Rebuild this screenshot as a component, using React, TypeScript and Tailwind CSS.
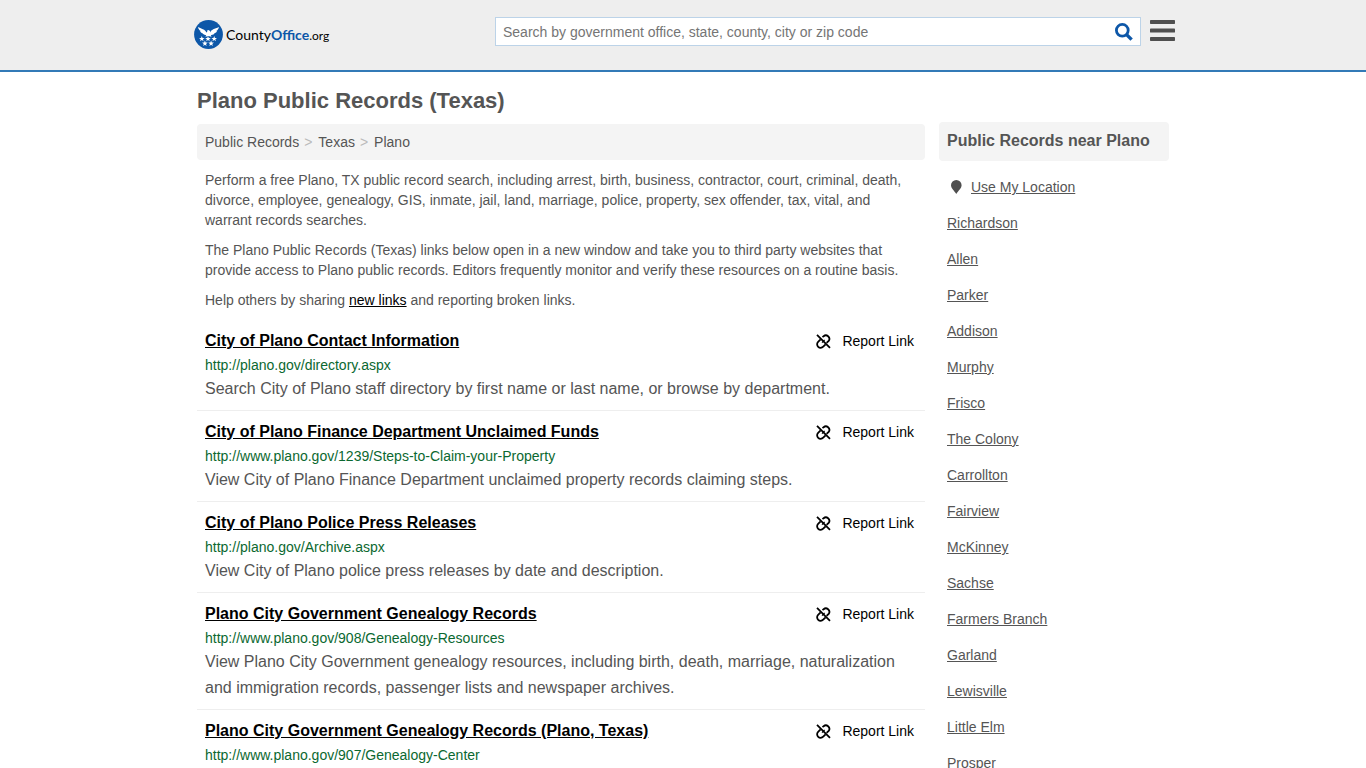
import React from "react";

type RecordLink = { title: string; url: string; description?: string };

const records: RecordLink[] = [
  {
    title: "City of Plano Contact Information",
    url: "http://plano.gov/directory.aspx",
    description: "Search City of Plano staff directory by first name or last name, or browse by department.",
  },
  {
    title: "City of Plano Finance Department Unclaimed Funds",
    url: "http://www.plano.gov/1239/Steps-to-Claim-your-Property",
    description: "View City of Plano Finance Department unclaimed property records claiming steps.",
  },
  {
    title: "City of Plano Police Press Releases",
    url: "http://plano.gov/Archive.aspx",
    description: "View City of Plano police press releases by date and description.",
  },
  {
    title: "Plano City Government Genealogy Records",
    url: "http://www.plano.gov/908/Genealogy-Resources",
    description:
      "View Plano City Government genealogy resources, including birth, death, marriage, naturalization and immigration records, passenger lists and newspaper archives.",
  },
  {
    title: "Plano City Government Genealogy Records (Plano, Texas)",
    url: "http://www.plano.gov/907/Genealogy-Center",
  },
];

const nearby = [
  "Richardson", "Allen", "Parker", "Addison", "Murphy", "Frisco", "The Colony", "Carrollton",
  "Fairview", "McKinney", "Sachse", "Farmers Branch", "Garland", "Lewisville", "Little Elm", "Prosper",
];

const STAR = "M0 -2.9L.75 -.95 2.8 -.9 1.15 .4 1.75 2.4 0 1.2 -1.75 2.4 -1.15 .4 -2.8 -.9 -.75 -.95Z";
const starSpots = [[7.8, 18.9], [14, 18.9], [20.2, 18.9], [10.9, 23.5], [17.1, 23.5]];

function Emblem() {
  return (
    <svg viewBox="0 0 29 29" className="size-[29px]" aria-hidden="true">
      <circle cx="14.5" cy="14.5" r="14.4" fill="#0d57a8" />
      <g fill="#fff">
        <path d="M4 7C7 8.8 10 9 11.5 11L12.4 12.4 13.4 11.8 12.8 10.8 14.6 10 16 11 16.3 12.4C17.2 9.4 20.5 9 25 7 24.4 9.2 23.5 10.3 22.3 11.1L23 11.2C22.2 12.6 21 13.2 19.9 13.5L20.4 13.8C19 15 17.6 15.1 16.8 15.2L17.6 16.8 14.5 16 11.4 16.8 12.2 15.2C11 15 10 14.8 8.7 13.8L9.2 13.5C7.8 13.1 6.8 12.4 6 11.2L6.8 11.1C5.4 10.2 4.4 9.2 4 7Z" />
        {starSpots.map(([x, y]) => (
          <path key={`${x}-${y}`} d={STAR} transform={`translate(${x} ${y})`} />
        ))}
      </g>
    </svg>
  );
}

function BrokenLinkIcon() {
  return (
    <svg viewBox="0 0 15 15" className="size-[15px]" fill="none" stroke="#000" strokeWidth="1.8" aria-hidden="true">
      <path d="M1 .8L14 13.8" />
      <path d="M6.5 3.2L7.6 2.2A3.5 3.5 0 0 1 12.9 6.6L10.6 8.8" />
      <path d="M4.6 5.4L2.1 7.8A3.5 3.5 0 0 0 7.2 12.7L9.6 10.3" />
      <path d="M8.6 6L6 8.6" strokeWidth="1.2" />
    </svg>
  );
}

export default function App() {
  return (
    <div className="h-screen overflow-hidden bg-white font-['Liberation_Sans',Arial,sans-serif] text-sm text-[#555]">
      <header className="border-b-2 border-[#337ab7] bg-[#eee]">
        <div className="mx-auto flex h-[70px] max-w-[984px] items-start pl-[3px]">
          <a href="#" aria-label="CountyOffice.org" className="flex items-center gap-[3px] pt-5">
            <Emblem />
            <span className="font-['Lato',sans-serif] text-sm leading-5 text-black">
              County<b className="font-bold text-[#0d57a8]">Office</b>
              <span className="text-xs">.org</span>
            </span>
          </a>
          <form className="mt-[17px] ml-auto flex h-[29px] w-[646px] items-center border border-[#bcd3e8] bg-white" onSubmit={(e) => e.preventDefault()}>
            <input
              type="text"
              aria-label="Search"
              placeholder="Search by government office, state, county, city or zip code"
              className="min-w-0 flex-1 px-[7px] outline-none placeholder:text-[#757575]"
            />
            <button type="submit" aria-label="Search" className="pr-[7px]">
              <svg viewBox="0 0 18 18" className="size-[18px]" fill="none" stroke="#0d57a8" aria-hidden="true">
                <circle cx="7.3" cy="7.3" r="5.9" strokeWidth="2.8" />
                <path d="M11.6 11.6L16.6 16.6" strokeWidth="3.4" />
              </svg>
            </button>
          </form>
          <button type="button" aria-label="Menu" className="mt-5 ml-[9px]">
            <svg viewBox="0 0 25 21" className="h-[21px] w-[25px]" fill="#4f4f4f" aria-hidden="true">
              <rect width="25" height="4" rx=".7" />
              <rect y="8.6" width="25" height="4" rx=".7" />
              <rect y="17" width="25" height="4" rx=".7" />
            </svg>
          </button>
        </div>
      </header>

      <div className="mx-auto max-w-[972px]">
        <h1 className="pt-[15px] pb-[9px] text-[22px] leading-7 font-bold">Plano Public Records (Texas)</h1>
        <div className="flex items-start gap-[14px]">
          <main className="min-w-0 flex-1">
            <nav aria-label="Breadcrumb" className="flex rounded bg-[#f4f4f4] px-2 py-2 leading-5">
              <a href="#">Public Records</a>
              <span className="pr-[6px] pl-[5px] text-[#bbb]">&gt;</span>
              <a href="#">Texas</a>
              <span className="pr-[6px] pl-[5px] text-[#bbb]">&gt;</span>
              <a href="#">Plano</a>
            </nav>
            <div className="space-y-[10px] px-2 py-[10px] leading-5">
              <p>
                Perform a free Plano, TX public record search, including arrest, birth, business, contractor, court,
                criminal, death, divorce, employee, genealogy, GIS, inmate, jail, land, marriage, police, property,
                sex offender, tax, vital, and warrant records searches.
              </p>
              <p>
                The Plano Public Records (Texas) links below open in a new window and take you to third party
                websites that provide access to Plano public records. Editors frequently monitor and verify these
                resources on a routine basis.
              </p>
              <p>
                Help others by sharing <a href="#" className="text-black underline">new links</a> and reporting broken
                links.
              </p>
            </div>
            <ul>
              {records.map((r) => (
                <li key={r.title} className="border-b border-[#eee] px-2 py-2">
                  <div className="flex items-center justify-between pr-[3px] text-black">
                    <h2 className="text-base leading-[26px] font-bold">
                      <a href="#" className="underline">{r.title}</a>
                    </h2>
                    <a href="#" className="flex items-center gap-[11px]">
                      <BrokenLinkIcon />
                      Report Link
                    </a>
                  </div>
                  <div className="leading-[22px] text-[#0b6830]">{r.url}</div>
                  {r.description && <p className="text-base leading-[26px]">{r.description}</p>}
                </li>
              ))}
            </ul>
          </main>

          <aside className="-mt-0.5 w-[230px] shrink-0">
            <h3 className="rounded bg-[#f4f4f4] px-2 pt-[6px] pb-[7px] text-base leading-[26px] font-bold">
              Public Records near Plano
            </h3>
            <ul className="mt-2 px-2 leading-9">
              <li className="flex items-center gap-[9px] pl-1">
                <svg viewBox="0 0 11 14" className="h-[14px] w-[11px]" fill="#4f4f4f" aria-hidden="true">
                  <path d="M5.3 0A5.3 5.3 0 0 1 10.6 5.3C10.6 8.2 7.3 10.8 5.3 14 3.3 10.8 0 8.2 0 5.3A5.3 5.3 0 0 1 5.3 0Z" />
                </svg>
                <a href="#" className="underline">Use My Location</a>
              </li>
              {nearby.map((city) => (
                <li key={city}>
                  <a href="#" className="underline">{city}</a>
                </li>
              ))}
            </ul>
          </aside>
        </div>
      </div>
    </div>
  );
}
